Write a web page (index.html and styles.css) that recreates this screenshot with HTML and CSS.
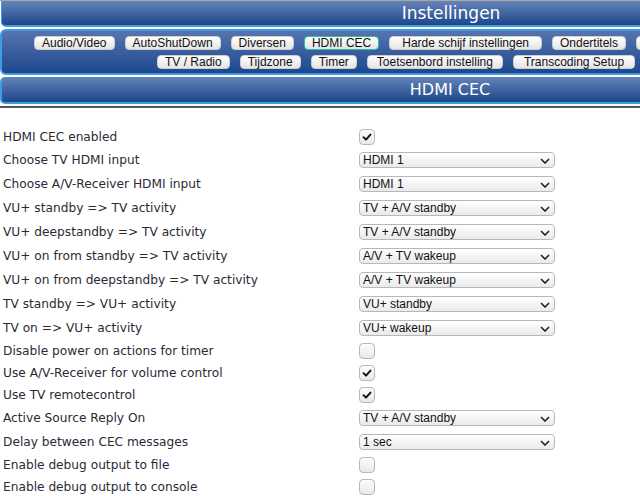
FILE: index.html
```html
<!DOCTYPE html>
<html>
<head>
<meta charset="utf-8">
<link rel="stylesheet" href="styles.css">
</head>
<body>
<div class="page">
  <div class="topbar">Instellingen</div>
  <div class="nav">
    <div class="navrow first">
      <span class="btn">Audio/Video</span>
      <span class="btn">AutoShutDown</span>
      <span class="btn">Diversen</span>
      <span class="btn active">HDMI CEC</span>
      <span class="btn w10">Harde schijf instellingen</span>
      <span class="btn">Ondertitels</span>
      <span class="btn">Opnemen</span>
      <span class="btn">Ouderlijk toezicht</span>
    </div>
    <div class="navrow second">
      <span class="btn">TV / Radio</span>
      <span class="btn">Tijdzone</span>
      <span class="btn">Timer</span>
      <span class="btn w4">Toetsenbord instelling</span>
      <span class="btn w6">Transcoding Setup</span>
      <span class="btn">Weergave</span>
    </div>
  </div>
  <div class="header">HDMI CEC</div>
  <div class="sep"></div>
  <div class="form">
    <div class="row cb"><span class="label">HDMI CEC enabled</span><span class="check"><svg viewBox="0 0 16 16" width="16" height="16"><path d="M4 8.2 L6.8 11 L12 5.2" fill="none" stroke="#111" stroke-width="2.2" stroke-linecap="round" stroke-linejoin="round"/></svg></span></div>
    <div class="row sel"><span class="label">Choose TV HDMI input</span><span class="select">HDMI 1<svg class="chev" viewBox="0 0 10 6" width="10" height="6"><path d="M1 1 L5 5 L9 1" fill="none" stroke="#222" stroke-width="1.6"/></svg></span></div>
    <div class="row sel"><span class="label">Choose A/V-Receiver HDMI input</span><span class="select">HDMI 1<svg class="chev" viewBox="0 0 10 6" width="10" height="6"><path d="M1 1 L5 5 L9 1" fill="none" stroke="#222" stroke-width="1.6"/></svg></span></div>
    <div class="row sel"><span class="label">VU+ standby =&gt; TV activity</span><span class="select">TV + A/V standby<svg class="chev" viewBox="0 0 10 6" width="10" height="6"><path d="M1 1 L5 5 L9 1" fill="none" stroke="#222" stroke-width="1.6"/></svg></span></div>
    <div class="row sel"><span class="label">VU+ deepstandby =&gt; TV activity</span><span class="select">TV + A/V standby<svg class="chev" viewBox="0 0 10 6" width="10" height="6"><path d="M1 1 L5 5 L9 1" fill="none" stroke="#222" stroke-width="1.6"/></svg></span></div>
    <div class="row sel"><span class="label">VU+ on from standby =&gt; TV activity</span><span class="select">A/V + TV wakeup<svg class="chev" viewBox="0 0 10 6" width="10" height="6"><path d="M1 1 L5 5 L9 1" fill="none" stroke="#222" stroke-width="1.6"/></svg></span></div>
    <div class="row sel"><span class="label">VU+ on from deepstandby =&gt; TV activity</span><span class="select">A/V + TV wakeup<svg class="chev" viewBox="0 0 10 6" width="10" height="6"><path d="M1 1 L5 5 L9 1" fill="none" stroke="#222" stroke-width="1.6"/></svg></span></div>
    <div class="row sel"><span class="label">TV standby =&gt; VU+ activity</span><span class="select">VU+ standby<svg class="chev" viewBox="0 0 10 6" width="10" height="6"><path d="M1 1 L5 5 L9 1" fill="none" stroke="#222" stroke-width="1.6"/></svg></span></div>
    <div class="row sel"><span class="label">TV on =&gt; VU+ activity</span><span class="select">VU+ wakeup<svg class="chev" viewBox="0 0 10 6" width="10" height="6"><path d="M1 1 L5 5 L9 1" fill="none" stroke="#222" stroke-width="1.6"/></svg></span></div>
    <div class="row cb"><span class="label">Disable power on actions for timer</span><span class="check"></span></div>
    <div class="row cb"><span class="label">Use A/V-Receiver for volume control</span><span class="check"><svg viewBox="0 0 16 16" width="16" height="16"><path d="M4 8.2 L6.8 11 L12 5.2" fill="none" stroke="#111" stroke-width="2.2" stroke-linecap="round" stroke-linejoin="round"/></svg></span></div>
    <div class="row cb"><span class="label">Use TV remotecontrol</span><span class="check"><svg viewBox="0 0 16 16" width="16" height="16"><path d="M4 8.2 L6.8 11 L12 5.2" fill="none" stroke="#111" stroke-width="2.2" stroke-linecap="round" stroke-linejoin="round"/></svg></span></div>
    <div class="row sel"><span class="label">Active Source Reply On</span><span class="select">TV + A/V standby<svg class="chev" viewBox="0 0 10 6" width="10" height="6"><path d="M1 1 L5 5 L9 1" fill="none" stroke="#222" stroke-width="1.6"/></svg></span></div>
    <div class="row sel"><span class="label">Delay between CEC messages</span><span class="select">1 sec<svg class="chev" viewBox="0 0 10 6" width="10" height="6"><path d="M1 1 L5 5 L9 1" fill="none" stroke="#222" stroke-width="1.6"/></svg></span></div>
    <div class="row cb"><span class="label">Enable debug output to file</span><span class="check"></span></div>
    <div class="row cb"><span class="label">Enable debug output to console</span><span class="check"></span></div>
  </div>
</div>
</body>
</html>
```
FILE: styles.css
```css
html, body { margin: 0; padding: 0; overflow: hidden; background: #fff; }
.page { width: 900px; border-top: 1px solid #a8a8a8; }
.topbar {
  height: 24px; margin-left: 1px;
  background: linear-gradient(#6584b8, #1d468b);
  border-left: 1px solid #3e9ce0; border-bottom: 2px solid #3e9ce0;
  border-bottom-left-radius: 5px;
  color: #fff; font-family: "DejaVu Sans", sans-serif; font-size: 17px;
  text-align: center; line-height: 25px;
}
.nav {
  margin-top: 2px;
  height: 37px; padding-top: 5px;
  background: linear-gradient(#5575b0, #1d478d);
  border: 2px solid #3e9ce0; border-radius: 6px;
  display: flex; flex-direction: column; gap: 5px;
}
.navrow { display: flex; gap: 10px; }
.navrow.first { padding-left: 32px; }
.navrow.second { padding-left: 155px; }
.btn {
  height: 12px; line-height: 12px; padding: 0 7px;
  background: linear-gradient(#ffffff, #e4e4e4);
  border: 1px solid #cfcfcf; border-radius: 4px;
  font-family: "Liberation Sans", Arial, sans-serif; font-size: 12px; color: #111;
  white-space: nowrap;
}
.btn.w10 { padding: 0 12px; }
.btn.w4 { padding: 0 9px; }
.btn.w6 { padding: 0 10px; }
.btn.active { border-color: #2fbfa0; }
.header {
  margin-top: 2px; height: 25px;
  background: linear-gradient(#6584b8, #1d468b);
  border: 2px solid #3e9ce0; border-top-width: 0; border-radius: 5px;
  color: #fff; font-family: "DejaVu Sans", sans-serif; font-size: 16px;
  text-align: center; line-height: 26px;
}
.sep { margin-top: 2px; height: 2px; background: #555; }
.form { padding-top: 18px; }
.row { display: flex; align-items: center; padding-left: 3px; }
.row.cb { height: 22px; }
.row.sel { height: 24px; }
.label {
  width: 356px; font-family: "DejaVu Sans", Verdana, sans-serif; font-size: 12.2px; color: #2a2a36;
}
.check {
  width: 14px; height: 14px; border: 1px solid #b8b8b8; border-radius: 4px;
  background: linear-gradient(#fdfdfd, #e8e8e8);
  display: flex; align-items: center; justify-content: center;
}
.check svg { width: 14px; height: 14px; }
.select {
  position: relative;
  width: 188px; height: 14px; line-height: 14px; padding-left: 3px; padding-right: 3px;
  border: 1px solid #b8b8b8; border-radius: 4px;
  background: linear-gradient(#ffffff, #eaeaea);
  font-family: "Liberation Sans", Arial, sans-serif; font-size: 12px; color: #111;
}
.chev { position: absolute; right: 4px; top: 5px; }
```
